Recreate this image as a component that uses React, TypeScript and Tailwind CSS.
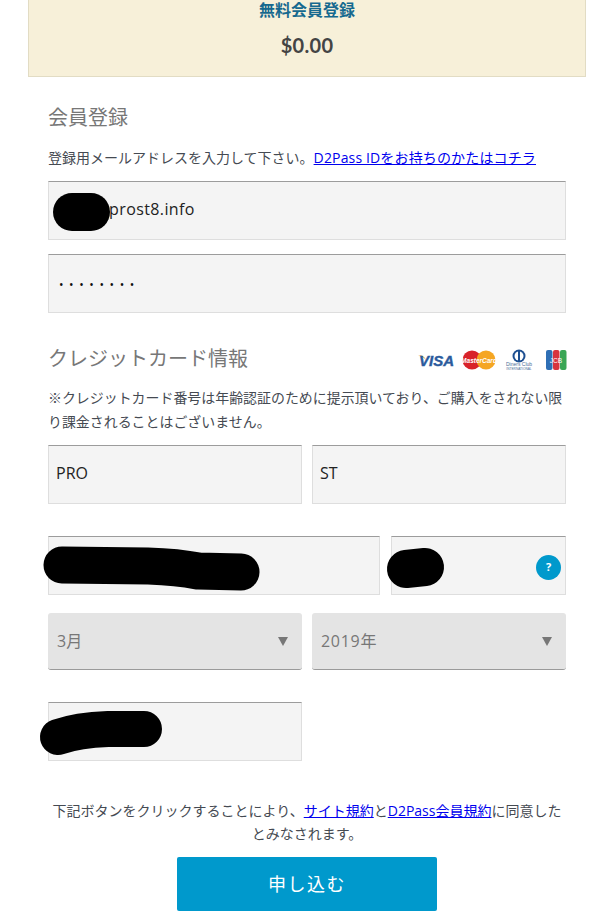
const font = '[font-family:"Open_Sans","Noto_Sans_CJK_JP",sans-serif]';

function Field({ children, className = '' }: { children?: React.ReactNode; className?: string }) {
  return (
    <div className={`relative h-[59px] flex items-center pl-[7px] pb-[3px] bg-[#f4f4f4] border border-[#dedede] border-t-[#9c9c9c] text-[16px] text-[#222] ${className}`}>
      {children}
    </div>
  );
}

function Select({ label, className = '' }: { label: string; className?: string }) {
  return (
    <div className="flex-1 h-[57px] flex items-center justify-between pl-[9px] pr-[14px] bg-[#e4e4e4] rounded-[3px] border-b border-b-[#9a9a9a] text-[16px] text-[#777]">
      <span className={className}>{label}</span>
      <span className="w-0 h-0 border-x-[5px] border-x-transparent border-t-[9px] border-t-[#777]" />
    </div>
  );
}

function Scribble({ d, width }: { d: string; width: number }) {
  return (
    <svg className="absolute left-[-1px] top-[-1px] overflow-visible" width="10" height="10">
      <path d={d} fill="none" stroke="#000" strokeWidth={width} strokeLinecap="round" strokeLinejoin="round" />
    </svg>
  );
}

function CardLogos() {
  return (
    <svg width="150" height="24" viewBox="0 0 150 24">
      {/* visa */}
      <path d="M0 7 q6 0 8 5 l-2 -2 q-2 -2 -6 -3z" fill="#e9a23b" />
      <text x="1" y="17.5" fontSize="15" fontWeight="800" fontStyle="italic" fill="#2a5a9c" stroke="#2a5a9c" strokeWidth="0.4" fontFamily="Liberation Sans">VISA</text>
      {/* mastercard */}
      <circle cx="54" cy="12" r="9.5" fill="#d8232a" />
      <circle cx="68" cy="12" r="9.5" fill="#f5a623" />
      <text x="61" y="14.5" fontSize="6.5" fontWeight="700" fontStyle="italic" fill="#fff" textAnchor="middle" fontFamily="Liberation Sans">MasterCard</text>
      {/* diners */}
      <circle cx="101" cy="8" r="6.5" fill="#1d4f91" />
      <circle cx="101" cy="8" r="4.5" fill="#fff" />
      <rect x="100" y="3" width="2" height="10" fill="#1d4f91" />
      <text x="101" y="18" fontSize="5" fill="#4a6a96" textAnchor="middle" fontFamily="Liberation Sans">Diners Club</text>
      <text x="101" y="22" fontSize="3.2" fill="#4a6a96" textAnchor="middle" fontFamily="Liberation Sans">INTERNATIONAL</text>
      {/* jcb */}
      <rect x="128" y="2" width="6.5" height="20" rx="2" fill="#2f6fb5" />
      <rect x="135" y="2" width="6.5" height="20" rx="2" fill="#d8343f" />
      <rect x="142" y="2" width="6.5" height="20" rx="2" fill="#3aa655" />
      <text x="138" y="15" fontSize="6.5" fill="#fff" textAnchor="middle" fontFamily="Liberation Sans">JCB</text>
    </svg>
  );
}

export default function App() {
  return (
    <div className={`w-[614px] h-[911px] overflow-hidden bg-white ${font}`}>
      <div className="mx-[28px] h-[77px] bg-[#f7f0d9] border border-t-0 border-[#e2dcc4] flex flex-col items-center">
        <div className="mt-[-1px] text-[16px] leading-[22px] font-bold text-[#16698f]">無料会員登録</div>
        <div className="mt-[11px] text-[20px] leading-[26px] font-bold tracking-[0.3px] text-[#444] [font-family:'Lato',sans-serif]">$0.00</div>
      </div>

      <div className="px-[48px]">
        <h2 className="mt-[27px] text-[20px] leading-[28px] text-[#777]">会員登録</h2>
        <p className="mt-[14px] text-[14px] leading-[24px] text-[#454a52] whitespace-nowrap">
          登録用メールアドレスを入力して下さい。<a href="#" className="text-[#0000ee] underline tracking-[0.15px]">D2Pass IDをお持ちのかたはコチラ</a>
        </p>
        <Field className="mt-[11px]">
          <span className="ml-[53px] tracking-[0.4px]">prost8.info</span>
          <Scribble d="M24 31 L43 31" width={38} />
        </Field>
        <Field className="mt-[14px]">
          <span className="ml-[3px] mt-[5px] text-[12px] tracking-[5.6px] text-[#111]">••••••••</span>
        </Field>

        <div className="mt-[32px] h-[28px] flex items-center justify-between">
          <h2 className="text-[20px] leading-[28px] text-[#777]">クレジットカード情報</h2>
          <div className="mr-[-2px] mt-[2px]"><CardLogos /></div>
        </div>
        <p className="mt-[13px] text-[13.95px] leading-[24px] text-[#454a52]">
          ※クレジットカード番号は年齢認証のために提示頂いており、ご購入をされない限り課金されることはございません。
        </p>
        <div className="mt-[11px] flex gap-[10px]">
          <Field className="flex-1">PRO</Field>
          <Field className="flex-1">ST</Field>
        </div>
        <div className="mt-[32px] flex gap-[11px]">
          <Field className="w-[332px]">
            <Scribble d="M14 29 L100 30 Q130 31 150 35 L193 36" width={37} />
          </Field>
          <Field className="flex-1">
            <Scribble d="M15 33 L34 31" width={38} />
            <span className="absolute right-[4px] top-[18px] w-[25px] h-[25px] rounded-full bg-[#0099cc] text-white text-[11px] font-bold flex items-center justify-center">?</span>
          </Field>
        </div>
        <div className="mt-[18px] flex gap-[10px]">
          <Select label="3月" />
          <Select label="2019年" className="tracking-[0.7px]" />
        </div>
        <Field className="mt-[32px] w-[254px]">
          <Scribble d="M10 35 Q30 28 60 27 L96 27" width={36} />
        </Field>

        <p className="mt-[38px] text-center text-[14px] leading-[23px] text-[#454a52]">
          下記ボタンをクリックすることにより、<a href="#" className="text-[#0000ee] underline">サイト規約</a>と<a href="#" className="text-[#0000ee] underline">D2Pass会員規約</a>に同意したとみなされます。
        </p>
        <button className="block mx-auto mt-[12px] w-[260px] h-[54px] rounded-[2px] bg-[#0099cc] text-white text-[18px] tracking-[1.5px]">申し込む</button>
      </div>
    </div>
  );
}
